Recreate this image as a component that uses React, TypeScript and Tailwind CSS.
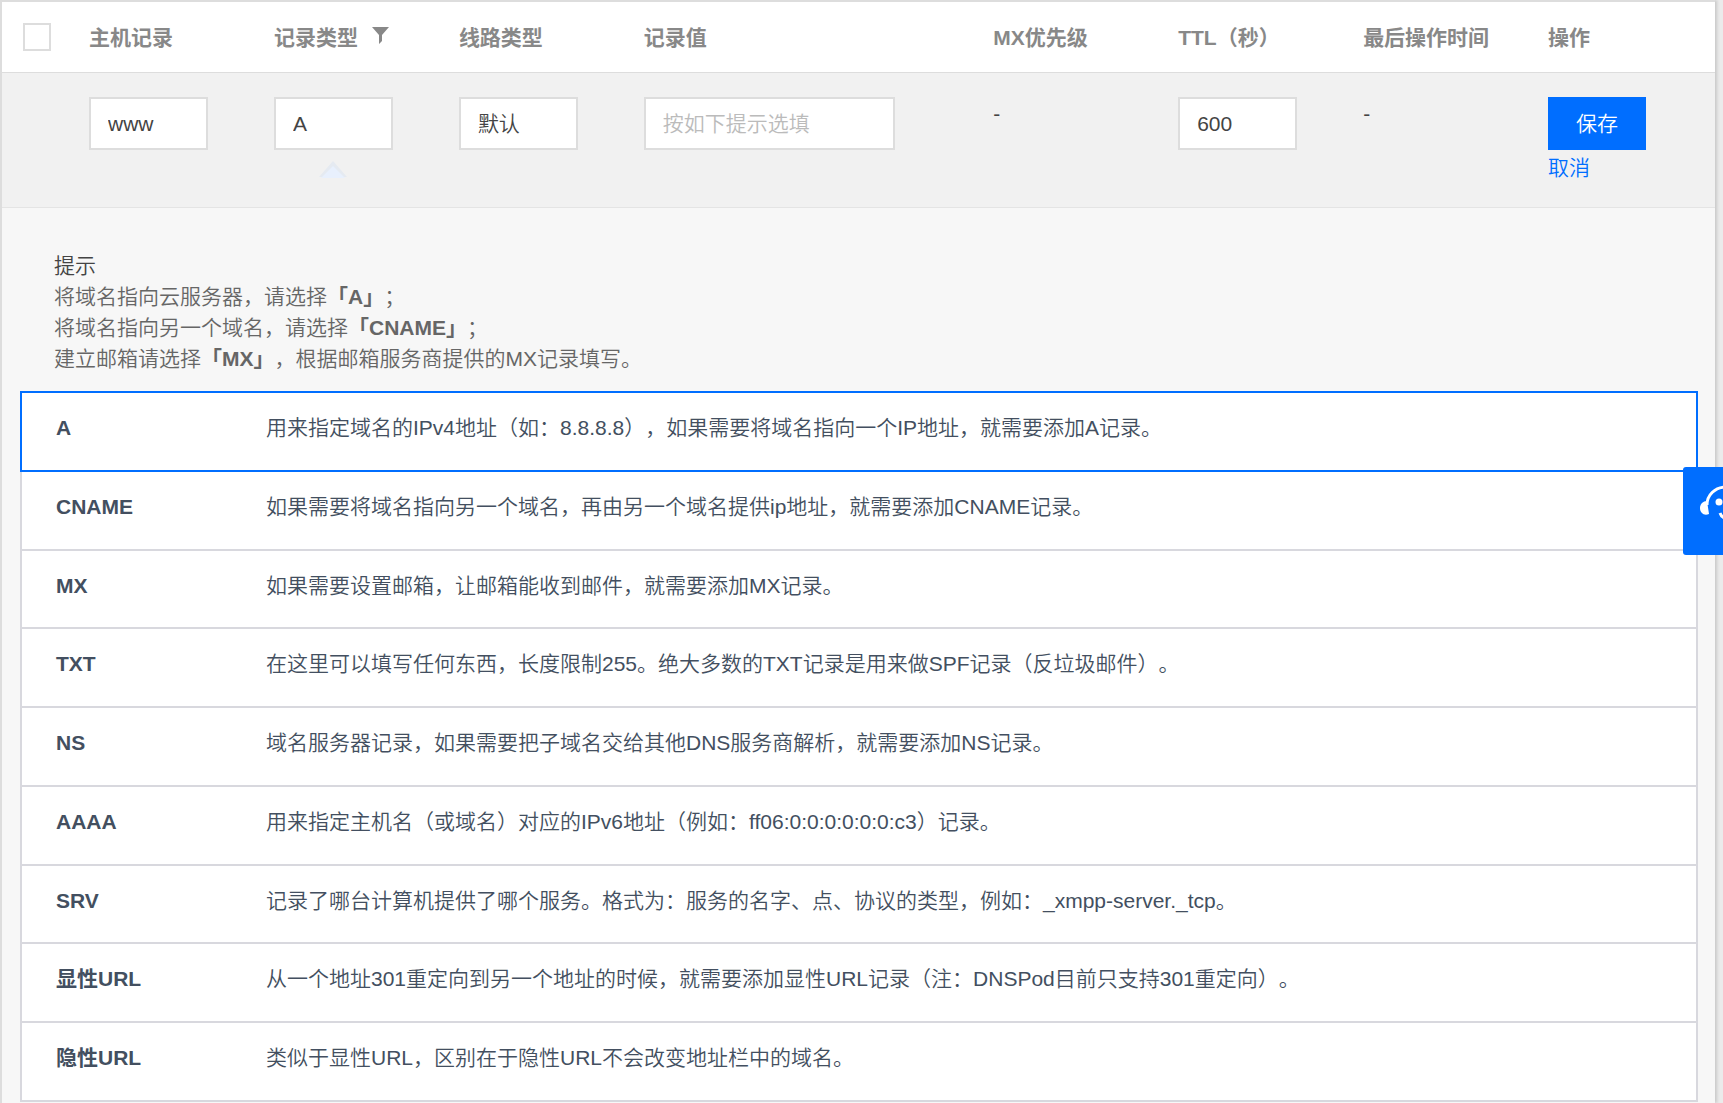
import React, { useState } from "react";

interface RecordType {
  name: string;
  desc: string;
}

const recordTypes: RecordType[] = [
  { name: "A", desc: "用来指定域名的IPv4地址（如：8.8.8.8），如果需要将域名指向一个IP地址，就需要添加A记录。" },
  { name: "CNAME", desc: "如果需要将域名指向另一个域名，再由另一个域名提供ip地址，就需要添加CNAME记录。" },
  { name: "MX", desc: "如果需要设置邮箱，让邮箱能收到邮件，就需要添加MX记录。" },
  { name: "TXT", desc: "在这里可以填写任何东西，长度限制255。绝大多数的TXT记录是用来做SPF记录（反垃圾邮件）。" },
  { name: "NS", desc: "域名服务器记录，如果需要把子域名交给其他DNS服务商解析，就需要添加NS记录。" },
  { name: "AAAA", desc: "用来指定主机名（或域名）对应的IPv6地址（例如：ff06:0:0:0:0:0:0:c3）记录。" },
  { name: "SRV", desc: "记录了哪台计算机提供了哪个服务。格式为：服务的名字、点、协议的类型，例如：_xmpp-server._tcp。" },
  { name: "显性URL", desc: "从一个地址301重定向到另一个地址的时候，就需要添加显性URL记录（注：DNSPod目前只支持301重定向）。" },
  { name: "隐性URL", desc: "类似于显性URL，区别在于隐性URL不会改变地址栏中的域名。" },
];

const fieldClass =
  "block w-full h-[53px] appearance-none rounded-none border-2 border-[#ddd] bg-white px-[17px] text-[#444] placeholder:text-[#bbb] outline-none";

const FilterIcon = () => (
  <svg width="17" height="17" viewBox="0 0 17 17" fill="#888" aria-hidden="true">
    <path d="M0 0h17l-7 8v6l-3 3V8z" />
  </svg>
);

// Header + the row being edited
const RecordForm = ({ type, onTypeChange }: { type: string; onTypeChange: (v: string) => void }) => {
  const [host, setHost] = useState("www");
  const [value, setValue] = useState("");
  const [ttl, setTtl] = useState("600");

  return (
    <table className="w-full table-fixed border-separate border-spacing-0 text-left">
      <thead>
        <tr className="h-[71px] bg-white text-[#888] [&>th]:border-b [&>th]:border-[#ddd] [&>th]:pl-[18px]">
          <th className="w-[69px]">
            <input
              type="checkbox"
              aria-label="全选"
              className="ml-[3px] block size-7 appearance-none border-2 border-[#ddd] bg-white"
            />
          </th>
          <th>主机记录</th>
          <th>
            <div className="flex items-center gap-[14px]">
              记录类型
              <button type="button" aria-label="筛选" className="pb-1">
                <FilterIcon />
              </button>
            </div>
          </th>
          <th>线路类型</th>
          <th className="w-[20.4%]">记录值</th>
          <th>MX优先级</th>
          <th>TTL（秒）</th>
          <th>最后操作时间</th>
          <th>操作</th>
        </tr>
      </thead>
      <tbody>
        <tr className="h-[135px] bg-[#f1f1f1] text-[#444] [&>td]:border-b [&>td]:border-[#e4e4e4] [&>td]:pt-6 [&>td]:pl-[18px] [&>td]:align-top">
          <td />
          <td className="pr-12">
            <input aria-label="主机记录" className={fieldClass} value={host} onChange={(e) => setHost(e.target.value)} />
          </td>
          <td className="pr-12">
            <select aria-label="记录类型" className={fieldClass} value={type} onChange={(e) => onTypeChange(e.target.value)}>
              {recordTypes.map((r) => (
                <option key={r.name}>{r.name}</option>
              ))}
            </select>
            <svg width="28" height="17" viewBox="0 0 28 17" className="mx-auto mt-[11px]" aria-hidden="true">
              <path d="M14 0l14 16H0z" fill="#e5eaf1" />
              <path d="M14 5l12 12H2z" fill="#e8f0fd" />
            </svg>
          </td>
          <td className="pr-12">
            <select aria-label="线路类型" className={fieldClass}>
              <option>默认</option>
            </select>
          </td>
          <td className="pr-20">
            <input
              aria-label="记录值"
              className={fieldClass}
              placeholder="按如下提示选填"
              value={value}
              onChange={(e) => setValue(e.target.value)}
            />
          </td>
          <td className="leading-[34px]">-</td>
          <td className="pr-12">
            <input aria-label="TTL（秒）" className={fieldClass} value={ttl} onChange={(e) => setTtl(e.target.value)} />
          </td>
          <td className="leading-[34px]">-</td>
          <td>
            <button type="button" className="block h-[53px] bg-[#006eff] px-7 text-white">
              保存
            </button>
            <a href="#cancel" className="mt-0.5 inline-block text-[#006eff]">
              取消
            </a>
          </td>
        </tr>
      </tbody>
    </table>
  );
};

const App: React.FC = () => {
  const [type, setType] = useState("A");

  return (
    <div className="min-h-screen bg-[#ebebeb] pr-2 font-['Liberation_Sans','Noto_Sans_CJK_SC',sans-serif] text-[21px] leading-[31px] font-[350] [text-spacing-trim:space-all]">
      <main className="min-h-screen border-t-2 border-l-2 border-[#ddd] bg-[#f7f7f7] shadow-[2px_0_3px_rgba(0,0,0,0.15)]">
        <RecordForm type={type} onTypeChange={setType} />

        <section className="pt-[42px] pr-[17px] pl-[18px]">
          <div className="pl-[34px] text-[#666]">
            <h2 className="text-[#444]">提示</h2>
            <p>将域名指向云服务器，请选择<b className="font-bold">「A」</b>；</p>
            <p>将域名指向另一个域名，请选择<b className="font-bold">「CNAME」</b>；</p>
            <p>建立邮箱请选择<b className="font-bold">「MX」</b>，根据邮箱服务商提供的MX记录填写。</p>
          </div>

          <table className="mt-[17px] h-[711px] w-full border-collapse bg-white text-left text-[#434f60]">
            <tbody>
              {recordTypes.map((r) => (
                <tr
                  key={r.name}
                  onClick={() => setType(r.name)}
                  className={`cursor-pointer border-2 align-top ${r.name === type ? "border-[#006eff]" : "border-[#d8d8de]"}`}
                >
                  <th scope="row" className="w-[245px] pt-[19px] pl-[34px]">{r.name}</th>
                  <td className="pt-[19px]">{r.desc}</td>
                </tr>
              ))}
            </tbody>
          </table>
        </section>
      </main>

      {/* Customer service tab, sticks to the right edge */}
      <button
        type="button"
        aria-label="在线客服"
        className="fixed top-[467px] right-0 h-[88px] w-10 overflow-hidden rounded-l-[3px] bg-[#006eff]"
      >
        <svg width="40" height="88" viewBox="0 0 40 88" fill="none" aria-hidden="true">
          <path d="M24 38c0-10 8-18 19-18" stroke="#fff" strokeWidth="3" />
          <path d="M24 34l2 13c-5 2-9-1-9-6 0-4 3-7 7-7z" fill="#fff" />
          <circle cx="36" cy="35" r="3.5" fill="#fff" />
          <path d="M37 46c1 3 3 5 6 5" stroke="#fff" strokeWidth="3" />
        </svg>
      </button>
    </div>
  );
};

export default App;
